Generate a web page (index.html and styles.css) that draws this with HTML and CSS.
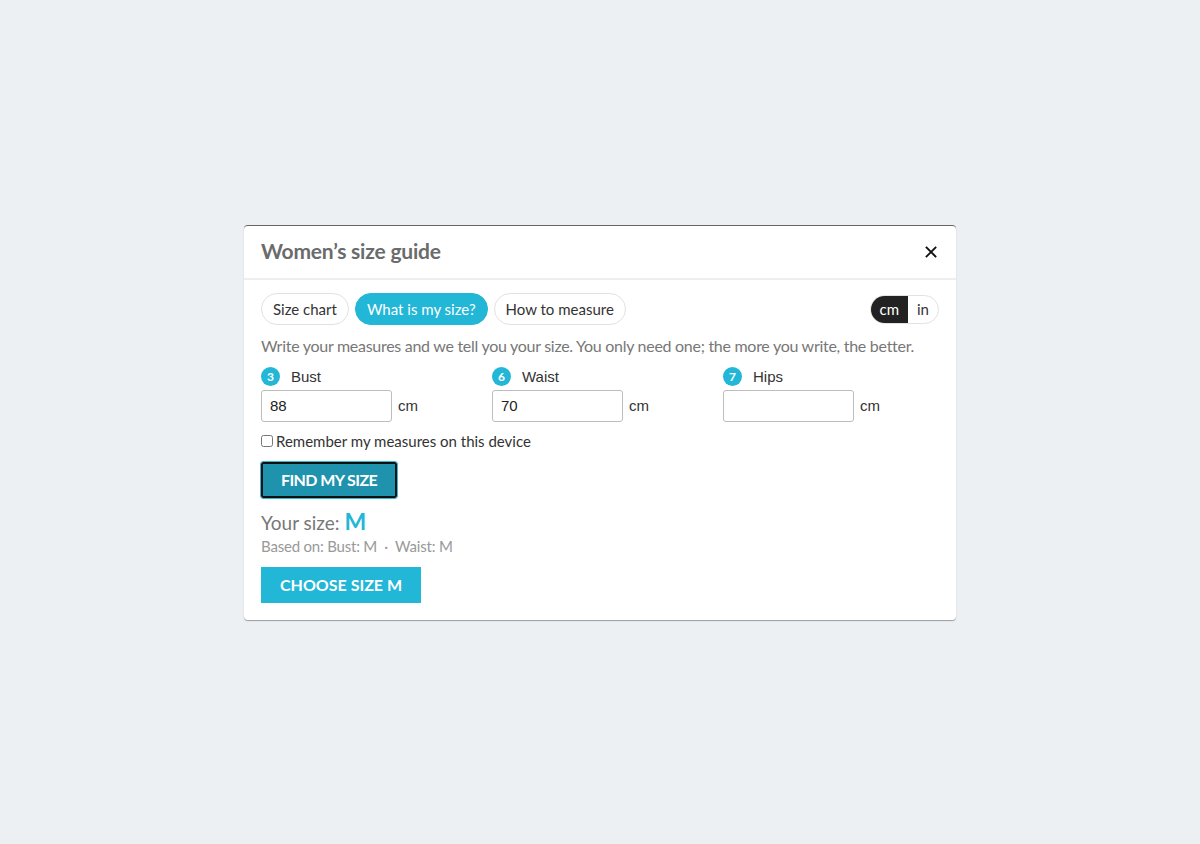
FILE: index.html
```html
<!DOCTYPE html>
<html>
<head>
	<title>Women's size guide</title>
	<meta charset="utf-8">
	<link rel="stylesheet" href="styles.css">
</head>
<body>
	<div class="modal">
		<div class="modal-head">
			<h2>Women’s size guide</h2>
			<button class="close" aria-label="Close">
				<svg width="12" height="12" viewBox="0 0 12 12"><path d="M1.5 1.5l9 9M10.5 1.5l-9 9" stroke="#111" stroke-width="1.8" stroke-linecap="square"/></svg>
			</button>
		</div>
		<div class="modal-body">
			<div class="toolbar">
				<div class="tabs">
					<span class="tab">Size chart</span>
					<span class="tab active">What is my size?</span>
					<span class="tab">How to measure</span>
				</div>
				<div class="units">
					<span class="unit on">cm</span>
					<span class="unit">in</span>
				</div>
			</div>
			<p class="intro">Write your measures and we tell you your size. You only need one; the more you write, the better.</p>
			<div class="fields">
				<div class="field">
					<label><span class="num">3</span>Bust</label>
					<div class="entry"><input value="88"><span>cm</span></div>
				</div>
				<div class="field">
					<label><span class="num">6</span>Waist</label>
					<div class="entry"><input value="70"><span>cm</span></div>
				</div>
				<div class="field">
					<label><span class="num">7</span>Hips</label>
					<div class="entry"><input value=""><span>cm</span></div>
				</div>
			</div>
			<label class="remember"><input type="checkbox">Remember my measures on this device</label>
			<button class="find">FIND MY SIZE</button>
			<div class="result">Your size: <strong>M</strong></div>
			<div class="based">Based on: Bust: M &nbsp;·&nbsp; Waist: M</div>
			<button class="choose">CHOOSE SIZE M</button>
		</div>
	</div>
</body>
</html>
```
FILE: styles.css
```css
html {
	background-color: #EDF0F3;
}

body {
	margin: 0;
	height: 844px;
	display: flex;
	align-items: center;
	justify-content: center;
	font-family: "Lato", "Liberation Sans", sans-serif;
	color: #333;
}

.modal {
	width: 712px;
	background: #FFF;
	border-radius: 4px;
	border-top: 1px solid #666;
	box-shadow: 0 1px 1px rgba(0, 0, 0, 0.35);
}

.modal-head {
	display: flex;
	align-items: center;
	justify-content: space-between;
	height: 49px;
	padding: 0 17px 3px;
	border-bottom: 2px solid #EEE;
}

.modal-head h2 {
	margin: 0;
	font-size: 21px;
	font-weight: 700;
	color: #6B6B6B;
	letter-spacing: -0.2px;
}

.close {
	border: none;
	background: none;
	padding: 0;
	margin: 3px 2px 0 0;
	display: flex;
}

.modal-body {
	padding: 13px 17px 17px;
}

.toolbar {
	display: flex;
	justify-content: space-between;
	align-items: center;
}

.tabs {
	display: flex;
	gap: 6px;
}

.tab {
	display: inline-block;
	height: 30px;
	line-height: 30px;
	padding: 0 11px;
	border: 1px solid #E2E2E2;
	border-radius: 16px;
	font-size: 15px;
	color: #333;
}

.tab.active {
	background: #22B6D7;
	border-color: #22B6D7;
	color: #FFF;
}

.units {
	display: flex;
	border: 1px solid #E2E2E2;
	border-radius: 15px;
	overflow: hidden;
	height: 27px;
	margin-top: 1px;
}

.unit {
	padding: 0 9px;
	line-height: 27px;
	font-size: 15px;
	color: #333;
}

.unit.on {
	background: #222;
	color: #FFF;
}

.intro {
	margin: 11px 0 0;
	font-size: 16px;
	color: #777;
	white-space: nowrap;
	letter-spacing: -0.28px;
}

.fields {
	display: grid;
	grid-template-columns: repeat(3, 231px);
	margin-top: 12px;
}

.field label {
	display: flex;
	align-items: center;
	gap: 11px;
	font-family: "Liberation Sans", sans-serif;
	font-size: 15px;
	color: #333;
	height: 20px;
}

.num {
	width: 19px;
	height: 19px;
	border-radius: 50%;
	background: #22B6D7;
	color: #FFF;
	font-family: "Lato", sans-serif;
	font-size: 12px;
	font-weight: 700;
	display: flex;
	align-items: center;
	justify-content: center;
}

.entry {
	display: flex;
	align-items: center;
	gap: 6px;
	margin-top: 3px;
	font-family: "Liberation Sans", sans-serif;
	font-size: 15px;
	color: #333;
}

.entry input {
	width: 131px;
	height: 32px;
	box-sizing: border-box;
	border: 1px solid #BDBDBD;
	border-radius: 3px;
	padding: 0 8px;
	font-family: "Liberation Sans", sans-serif;
	font-size: 15px;
	color: #222;
}

.remember {
	display: flex;
	align-items: center;
	margin-top: 10px;
	font-size: 15px;
	color: #333;
}

.remember input {
	margin: 0 3px 0 0;
	width: 12px;
	height: 12px;
}

.find {
	display: block;
	margin-top: 12px;
	height: 36px;
	padding: 0 18px;
	background: #1F93AD;
	border: 2px solid #111;
	outline: 1px solid #35B6D3;
	outline-offset: 0;
	border-radius: 2px;
	color: #FFF;
	font-family: "Lato", sans-serif;
	font-size: 16px;
	font-weight: 700;
	letter-spacing: -0.6px;
}

.result {
	margin-top: 9px;
	font-size: 19px;
	color: #777;
}

.result strong {
	color: #22B6D7;
	font-size: 23px;
	font-weight: 700;
}

.based {
	font-size: 15px;
	color: #999;
	letter-spacing: -0.2px;
	margin-top: 2px;
}

.choose {
	display: block;
	margin-top: 12px;
	height: 36px;
	padding: 0 19px;
	background: #22B6D7;
	border: none;
	border-radius: 0;
	color: #FFF;
	font-family: "Lato", sans-serif;
	font-size: 16px;
	font-weight: 700;
}
```
